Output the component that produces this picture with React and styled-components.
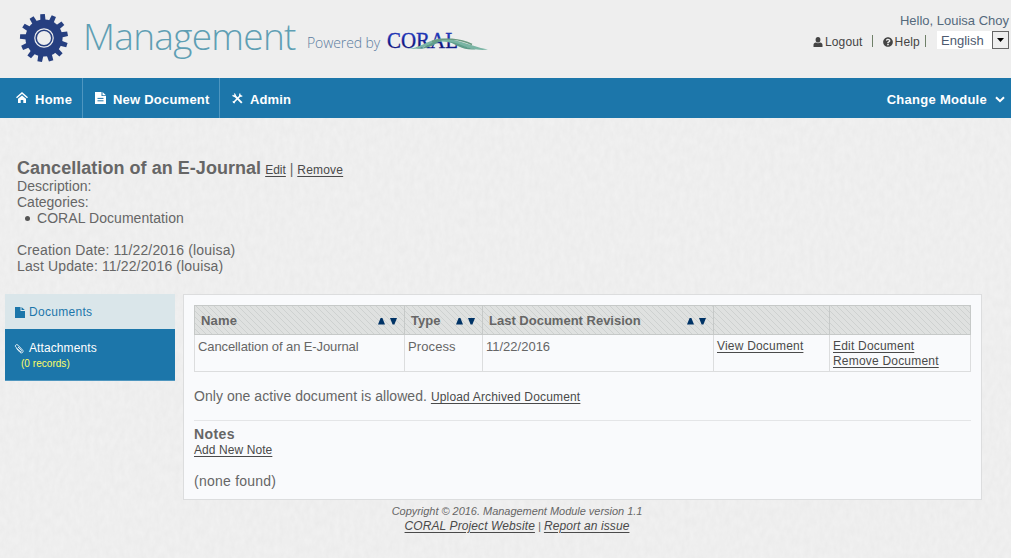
import React from "react";
import styled, { createGlobalStyle } from "styled-components";
import { FaQuestionCircle } from "react-icons/fa";

const Global = createGlobalStyle`
  * { box-sizing: border-box; }
  html, body { margin: 0; padding: 0; }
  body {
    background: #eeeeee;
    color: #666666;
    font-family: "Liberation Sans", Arial, sans-serif;
    font-size: 14px;
    line-height: 16px;
    overflow: hidden;
  }
`;

const Page = styled.div`
  position: relative;
  width: 1011px;
  height: 558px;
  overflow: hidden;
`;
const Paper = styled.svg`
  position: absolute;
  inset: 0;
  z-index: -1;
`;
const Text = styled.span`
  letter-spacing: ${(p) => p.$ls || 0}px;
  white-space: nowrap;
`;
const Link = styled.a`
  color: #4a4a4a;
  font-size: 12px;
  letter-spacing: ${(p) => p.$ls || 0}px;
  text-decoration: underline;
  text-underline-offset: 2px;
  white-space: nowrap;
`;

const Header = styled.header`
  display: flex;
  justify-content: space-between;
  height: 78px;
  background: #eeeeee;
`;
const Brand = styled.div`
  display: flex;
  align-items: flex-start;
  padding-left: 19px;
`;
const Gear = styled.svg`
  margin-top: 13px;
`;
const Title = styled.h1`
  margin: 8px 0 0 14px;
  width: 224px;
  font: 300 37px/55px "Open Sans", sans-serif;
  color: #5f9fb4;
`;
const Powered = styled.span`
  margin-top: 33px;
  width: 79px;
  font: 300 14px/20px "Open Sans", sans-serif;
  letter-spacing: -0.1px;
  color: #5c7d9e;
  white-space: nowrap;
`;
const Logo = styled.svg`
  margin-top: 26px;
`;
const Account = styled.div`
  display: flex;
  flex-direction: column;
  align-items: flex-end;
  padding: 13px 2px 0 0;
  color: #54697c;
  font-size: 13px;
`;
const AccountRow = styled.div`
  display: flex;
  align-items: center;
  height: 20px;
  margin-top: 1px;
  font-size: 12px;
  color: #444444;
`;
const Item = styled.span`
  display: flex;
  align-items: center;
  gap: ${(p) => p.$gap}px;
  padding-top: 3px;
`;
const Bar = styled.span`
  width: 1px;
  height: 12px;
  margin: 2px ${(p) => p.$right}px 0 ${(p) => p.$left}px;
  background: #6f8068;
`;
const Select = styled.div`
  display: flex;
  justify-content: space-between;
  width: 72px;
  height: 18px;
  padding-left: 4px;
  background: #ffffff;
  line-height: 19px;
  font-size: 13px;
  color: #4d5a70;
`;
const Arrow = styled.span`
  display: flex;
  align-items: center;
  justify-content: center;
  width: 17px;
  height: 18px;
  border: 1px solid #666666;
  background: #eeeeee;
`;

const Nav = styled.nav`
  display: flex;
  height: 40px;
  background: #1c76aa;
  color: #ffffff;
  font-size: 13px;
  font-weight: bold;
`;
const NavItem = styled.div`
  display: flex;
  align-items: center;
  gap: 7px;
  width: ${(p) => p.$w}px;
  padding: 3px 0 0 ${(p) => p.$pad}px;
  border-right: ${(p) => (p.$line ? "1px solid #4e96c0" : "0")};
  white-space: nowrap;
`;
const Glyph = styled.svg`
  flex: none;
  margin-top: ${(p) => p.$top || 0}px;
`;
const Module = styled.div`
  display: flex;
  align-items: center;
  gap: 8px;
  margin-left: auto;
  padding: 3px 6px 0 0;
`;

const Summary = styled.section`
  height: 176px;
  padding: 40px 17px 0;
`;
const Heading = styled.div`
  display: flex;
  align-items: baseline;
  height: 20px;
  line-height: 20px;
`;
const DocTitle = styled.h2`
  margin: 0 4px 0 0;
  font-size: 18px;
`;
const Line = styled.div`
  height: 16px;
  margin-top: ${(p) => p.$top || 0}px;
`;
const Bullet = styled.ul`
  margin: 0;
  padding-left: 20px;
  height: 16px;
  list-style: none;
  li { display: flex; align-items: center; }
  li::before {
    content: "";
    width: 5px;
    height: 5px;
    margin: 1px 7px 0 -12px;
    border-radius: 50%;
    background: #555555;
  }
`;

const Main = styled.div`
  display: flex;
  gap: 8px;
  padding-left: 5px;
`;
const Side = styled.aside`
  width: 170px;
  font-size: 12px;
`;
const Tab = styled.div`
  height: ${(p) => (p.$active ? 35 : 52)}px;
  padding: ${(p) => (p.$active ? "10px" : "11px")} 0 0 9px;
  background: ${(p) => (p.$active ? "#dae6ea" : "#1c76aa")};
  color: ${(p) => (p.$active ? "#1c76aa" : "#ffffff")};
  border-bottom: ${(p) => (p.$active ? "0" : "1px solid #4f96bf")};
`;
const TabLabel = styled.div`
  display: flex;
  align-items: center;
  gap: 4px;
  height: 16px;
`;
const Count = styled.div`
  padding-left: 7px;
  font-size: 10px;
  color: #ffff66;
`;

const Panel = styled.main`
  width: 799px;
  height: 206px;
  padding: 10px;
  border: 1px solid #dcddde;
  background: #f9fafc;
`;
const Table = styled.div`
  display: grid;
  grid-template-columns: 211px 78px 231px 116px 141px;
  width: 777px;
`;
const Head = styled.div`
  display: flex;
  align-items: center;
  justify-content: space-between;
  height: 30px;
  padding: 2px 7px 0 6px;
  border: 1px solid #c6c9c8;
  border-left-width: ${(p) => (p.$first ? 1 : 0)}px;
  background: #dfe1e0 repeating-linear-gradient(45deg, transparent 0 2.9px, #ced1d0 2.9px 3.8px, transparent 3.8px 4.243px);
  font-size: 13px;
  font-weight: bold;
`;
const Cell = styled.div`
  display: flex;
  flex-direction: column;
  align-items: flex-start;
  height: 37px;
  padding: 4px 3px 0;
  border: 1px solid #dcddde;
  border-top: 0;
  border-left-width: ${(p) => (p.$first ? 1 : 0)}px;
  font-size: 13px;
  line-height: ${(p) => (p.$links ? 15 : 16)}px;
`;
const Rule = styled.hr`
  height: 1px;
  margin: 16px 0 5px;
  border: 0;
  background: #e4e5e7;
`;
const Message = styled.div`
  height: 16px;
  margin-top: 16px;
`;
const NotesTitle = styled.h3`
  margin: 0;
  font-size: 14px;
  line-height: 16px;
  letter-spacing: 0.4px;
`;
const NoteLink = styled.div`
  height: 16px;
  line-height: 15px;
`;
const Footer = styled.footer`
  display: flex;
  flex-direction: column;
  align-items: center;
  width: 1034px;
  padding-top: 4px;
  font-size: 11px;
  font-style: italic;
  line-height: 14.5px;
`;

const teeth = Array.from({ length: 13 }, (_, i) => -3.5 + (i * 360) / 13);

const Sort = () => (
  <svg width="19" height="7" viewBox="0 0 19 7" fill="#003366">
    <path d="M0 6.5L2.6 0h1.800L7 6.5zM12 0h7l-2.6 6.5h-1.800z" />
  </svg>
);

export default function App() {
  return (
    <Page>
      <Global />
      <Paper width="1011" height="558">
        <filter id="grain" x="0" y="0" width="100%" height="100%" colorInterpolationFilters="sRGB">
          <feTurbulence type="fractalNoise" baseFrequency="0.2 0.11" numOctaves="3" seed="4" />
          <feColorMatrix values="0.03 0 0 0 0.919  0.03 0 0 0 0.919  0.03 0 0 0 0.919  0 0 0 0 1" />
        </filter>
        <rect width="1011" height="558" filter="url(#grain)" />
      </Paper>
      <Header>
        <Brand>
          <Gear width="50" height="50" viewBox="-25 -25 50 50">
            <g fill="#263f80">
              <circle r="18.6" />
              {teeth.map((a) => (
                <path key={a} transform={`rotate(${a})`} d="M-2.6-17.5L-2.3-24h4.6l.3 6.5z" />
              ))}
            </g>
            <circle r="9.2" fill="none" stroke="#eeeeee" strokeWidth="1.2" />
            <circle r="7" fill="#eeeeee" />
          </Gear>
          <Title><Text $ls={-0.7}>Management</Text></Title>
          <Powered>Powered by</Powered>
          <Logo width="104" height="28" viewBox="0 0 104 28">
            <defs>
              <linearGradient id="ink" x1="0" y1="0" x2="0" y2="1">
                <stop offset="0.2" stopColor="#2445d8" />
                <stop offset="0.75" stopColor="#0c1070" />
              </linearGradient>
            </defs>
            <text x="1" y="21.5" fontFamily="Liberation Serif" fontSize="23.5" textLength="71" lengthAdjust="spacingAndGlyphs" fill="url(#ink)" stroke="#1a2ba0" strokeWidth=".35">CORAL</text>
            <path d="M18 22.5C31 24.5 40 15 52 12.8C68 11 80 19 102 23.6C84 26 72 16 56 15.5C44 16.5 36 25.5 18 22.5z" fill="#7ab5a4" />
            <path d="M30 23C42 22 46 14 58 13C50 17 44 23.5 30 23zM62 15.5C72 16 78 22 90 23.2C78 25 70 18.5 62 15.500z" fill="#5f9d8a" />
            <path d="M46 15.5C58 11.5 74 12.5 86 18.500" fill="none" stroke="#6b9a82" strokeWidth="1.4" />
          </Logo>
        </Brand>
        <Account>
          <Text>Hello, Louisa Choy</Text>
          <AccountRow>
            <Item $gap={2}>
              <svg width="10" height="10" viewBox="0 0 10 10" fill="#444"><ellipse cx="5" cy="2.8" rx="2.4" ry="2.8" /><path d="M.5 10V8C.5 6.5 1.500 5.800 3 5.500q2 1.500 4 0c1.500.3 2.500 1 2.500 2.500v2z" /></svg>
              <Text $ls={0.15}>Logout</Text>
            </Item>
            <Bar $left={9} $right={10} />
            <Item $gap={2}><FaQuestionCircle size={10} /><Text $ls={0.2}>Help</Text></Item>
            <Bar $left={5} $right={11} />
            <Select>
              <Text>English</Text>
              <Arrow>
                <svg width="7" height="4" viewBox="0 0 7 4"><path d="M0 0h7L3.5 4z" fill="#000" /></svg>
              </Arrow>
            </Select>
          </AccountRow>
        </Account>
      </Header>
      <Nav>
        <NavItem $w={83} $pad={16} $line>
          <Glyph $top={-4} width="12" height="11" viewBox="0 0 12 11">
            <path d="M.5 5.8L6 1l5.5 4.8" fill="none" stroke="#fff" strokeWidth="1.5" />
            <path d="M2 6.8L6 3.4l4 3.4V11H7.3V8H4.7v3H2z" fill="#fff" />
          </Glyph>
          <Text $ls={0.25}>Home</Text>
        </NavItem>
        <NavItem $w={137} $pad={12} $line>
          <Glyph $top={-4} width="11" height="12" viewBox="0 0 11 12">
            <path d="M0 0h6.5v4H11v8H0zM7.5 0L11 3.2H7.5z" fill="#fff" />
            <path d="M2.5 6.4h6M2.5 8.8h6" stroke="#1c76aa" />
          </Glyph>
          <Text $ls={0.22}>New Document</Text>
        </NavItem>
        <NavItem $w={100} $pad={12}>
          <Glyph $top={-3} width="11" height="11" viewBox="0 0 11 11" fill="none" stroke="#fff">
            <path d="M2.5 2.5L9.8 9.8" strokeWidth="1.9" />
            <path d="M9 2L1.3 9.7" strokeWidth="1.6" />
            <path d="M.5 2.4l1.900 1 1-1L2.4.5M7.800.6L7.700 3.200l2.600-.1M.8 8.300l1.900 1.900" strokeWidth="1.2" />
          </Glyph>
          <Text $ls={0.1}>Admin</Text>
        </NavItem>
        <Module>
          <Text $ls={0.27}>Change Module</Text>
          <svg width="10" height="7" viewBox="0 0 10 7"><path d="M1 1.2l4 4 4-4" fill="none" stroke="#fff" strokeWidth="2" /></svg>
        </Module>
      </Nav>
      <Summary>
        <Heading>
          <DocTitle><Text $ls={0.04}>Cancellation of an E-Journal</Text></DocTitle>
          <Link>Edit</Link>
          <Text>&nbsp;|&nbsp;</Text>
          <Link $ls={0.2}>Remove</Link>
        </Heading>
        <Line><Text $ls={0.05}>Description:</Text></Line>
        <Line><Text>Categories:</Text></Line>
        <Bullet><li><Text $ls={0.06}>CORAL Documentation</Text></li></Bullet>
        <Line $top={16}><Text $ls={0.16}>Creation Date: 11/22/2016 (louisa)</Text></Line>
        <Line><Text $ls={0.13}>Last Update: 11/22/2016 (louisa)</Text></Line>
      </Summary>
      <Main>
        <Side>
          <Tab $active>
            <TabLabel>
              <Glyph width="11" height="11" viewBox="0 0 11 11" $top={1}>
                <path d="M1 0h5.500v4H11v7H1zM7.500 0L10.800 3H7.500z" fill="#1c76aa" />
              </Glyph>
              <Text $ls={0.3}>Documents</Text>
            </TabLabel>
          </Tab>
          <Tab>
            <TabLabel>
              <Glyph width="11" height="11" viewBox="0 0 11 11" fill="none" stroke="#fff">
                <path d="M2.5 5.5L6 9.3C7.8 11 10.2 8.8 8.5 7L4 2.2C2.4.7.5 2.5 1.8 4.2L6 8.3C7.2 9.2 8 7.8 7 6.9L4 4" strokeWidth=".9" />
              </Glyph>
              <Text $ls={0.1}>Attachments</Text>
            </TabLabel>
            <Count><Text $ls={0.04}>(0 records)</Text></Count>
          </Tab>
        </Side>
        <Panel>
          <Table>
            <Head $first><Text $ls={0.2}>Name</Text><Sort /></Head>
            <Head><Text>Type</Text><Sort /></Head>
            <Head><Text>Last Document Revision</Text><Sort /></Head>
            <Head />
            <Head />
            <Cell $first><Text $ls={-0.1}>Cancellation of an E-Journal</Text></Cell>
            <Cell><Text $ls={0.1}>Process</Text></Cell>
            <Cell><Text>11/22/2016</Text></Cell>
            <Cell $links><Link $ls={0.2}>View Document</Link></Cell>
            <Cell $links><Link $ls={0.2}>Edit Document</Link><Link $ls={0.2}>Remove Document</Link></Cell>
          </Table>
          <Message><Text $ls={0.05}>Only one active document is allowed. </Text><Link $ls={0.17}>Upload Archived Document</Link></Message>
          <Rule />
          <NotesTitle>Notes</NotesTitle>
          <NoteLink><Link $ls={0.08}>Add New Note</Link></NoteLink>
          <Line $top={15}><Text $ls={0.24}>(none found)</Text></Line>
        </Panel>
      </Main>
      <Footer>
        <Text $ls={-0.03}>Copyright © 2016. Management Module version 1.1</Text>
        <div><Link $ls={0.1}>CORAL Project Website</Link> | <Link $ls={0.1}>Report an issue</Link></div>
      </Footer>
    </Page>
  );
}
